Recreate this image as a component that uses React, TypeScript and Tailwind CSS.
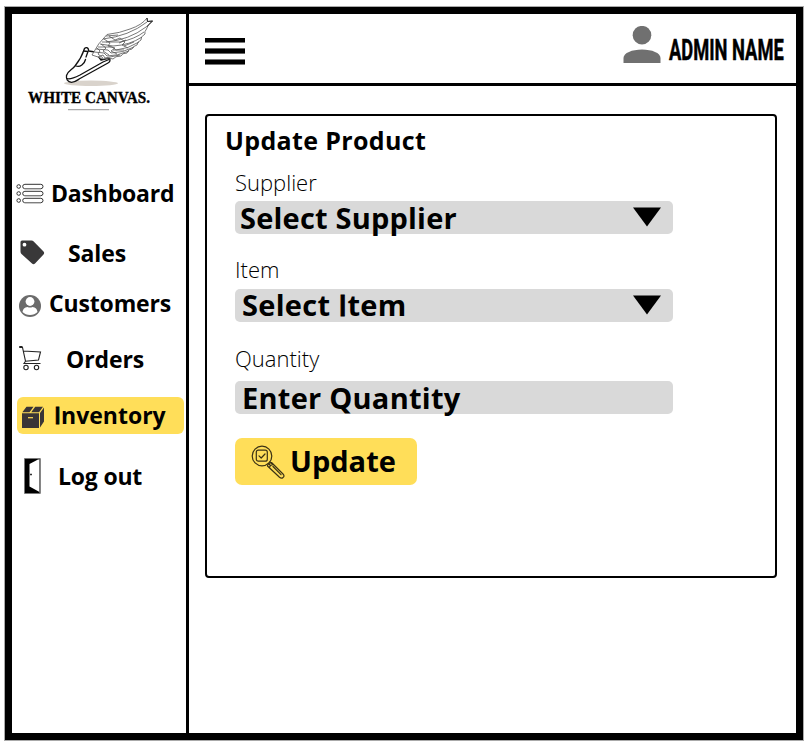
import type { ReactNode } from "react";

const openSans = "font-['Open_Sans','Noto_Sans',sans-serif]";

function Logo() {
  return (
    <svg className="block" width="174" height="100" viewBox="12 14 174 100" fill="none">
      <ellipse cx="91" cy="83.3" rx="27" ry="2.7" fill="#d9d3cc" />
      <g stroke="#111" strokeWidth="1.3" strokeLinejoin="round" strokeLinecap="round">
        <path d="M84 50 C84.500 47 88.500 46.500 88.700 51 L95 52 L101 60 L109.500 58 Q111 61.500 108 63 L80 78.500 C77 80.500 75 82.300 71.500 82.300 C67.500 82 66 79 66.500 75.500 C67.500 71 72 70 75 66 C79 61 82 56 84 50 Z" fill="#fff" />
        <path d="M67 78.500 C70 80 75 77.500 80 75 L103 62 L109 59.500 M83.500 51 L88 51.500 M76 66 C80 67.500 84.500 64 85.500 59.500 M86 57 L88 51.500" />
      </g>
      <g stroke="#555" strokeWidth="0.8" strokeLinejoin="round">
        <path d="M92 55 Q98 43 107 34.500 Q120 33 130 29 Q142 25 147 18 L147.500 21.500 L152.500 21 Q147 25 146.500 29 Q144 32 145 34 Q140 37 141 40 Q137 42 137 45 Q133 46 132 49 Q128 49 127 53 Q122 53 121 56 Q115 56 113 59 L109 58 L103 59 L98 57 Z" fill="#fff" />
        <path d="M103 39 Q129 36 147 22 M106 42 Q129 40 146 27 M102 42 L120 42 Q135 39 144 32 M100 44 L113 46 Q130 45 142 37 M98 47 L112 47 L116 50 Q128 49 139 42 M96 49 L108 50 L111 53 Q123 53 134 47 M94 52 L104 53 L107 56 Q117 56 129 51 M98 57 L103 55 L105 58 L120 55 M104 39 L110 43 L108 46 L115 48 L111 51 L117 54 M101 44 L106 48 L103 51 L109 55 M97 48 L100 51 L98 54 L103 58 M109 36 L115 40 L120 38 L125 42 L122 45 L128 48 M106 36 L118 35 M119 43 L126 40 M124 46 L134 42 M113 50 L124 50" />
      </g>
      <path d="M147 18 L147.500 21.500 L152.500 21 L146.500 27" stroke="#222" strokeWidth="1" />
      <text x="28" y="102.500" textLength="122" lengthAdjust="spacingAndGlyphs" className="font-['Liberation_Serif',serif] text-[16px] font-bold" fill="#000" stroke="#000" strokeWidth="0.35">WHITE CANVAS.</text>
      <path d="M68 109.700 H109" stroke="#aaa" strokeWidth="1.3" />
    </svg>
  );
}

const ListIcon = () => (
  <svg width="28" height="22" viewBox="0 0 28 22" fill="#fff" stroke="#333" strokeWidth="1">
    {[3.5, 10.5, 17.500].map((y) => (
      <g key={y}>
        <circle cx="2.700" cy={y} r="1.800" />
        <rect x="6.700" y={y - 2.200} width="20.300" height="4.400" rx="2.200" />
        <path d="M8 0 H25" transform={`translate(0 ${y + 2.200})`} stroke="#888" />
      </g>
    ))}
  </svg>
);

const TagIcon = () => (
  <svg width="25" height="25" viewBox="0 0 25 25">
    <path fillRule="evenodd" fill="#393839" d="M2 .5 H11.500 Q12.800 .5 13.700 1.400 L23.500 11.500 Q24.800 13 23.500 14.500 L15 23.500 Q13.500 25 12 23.500 L1.500 14 Q.5 13 .5 11.500 V2 Q.5 .5 2 .5 Z M4.500 2.800 A1.900 1.900 0 1 0 4.500 6.600 A1.900 1.900 0 1 0 4.500 2.800 Z" />
  </svg>
);

const CustomerIcon = () => (
  <svg width="22" height="22" viewBox="0 0 22 22">
    <circle cx="11" cy="11" r="11" fill="#6b6b6b" />
    <circle cx="11" cy="6.500" r="4.400" fill="#fff" />
    <path d="M3.500 17 Q4 12.500 8.500 12 Q11 13 13.500 12 Q18 12.500 18.500 17 Q15.500 20 11 20 Q6.500 20 3.500 17 Z" fill="#fff" />
  </svg>
);

const CartIcon = () => (
  <svg width="24" height="25" viewBox="0 0 24 25" fill="none" stroke="#222" strokeWidth="1.100">
    <path d="M.5 1 L3.500 1.500 L6.500 15.200 L5 17.500 H21.500 M4.200 5 L21.500 6 L19.500 14 L6.300 15.300" />
    <path d="M.3 1 H3.500" strokeWidth="2" />
    <circle cx="7" cy="21.500" r="2.200" />
    <circle cx="17.500" cy="21.500" r="2.200" />
  </svg>
);

const BoxIcon = () => (
  <svg width="23" height="23" viewBox="0 0 23 23">
    <path fill="#393536" d="M.3 6.300 L4.500 .8 H11.500 L7.500 6.300 Z M9.200 6.300 L13.200 .8 H21 L17 6.300 Z M0 7.300 H17 V22 H0 Z M18 7 L22 1.500 V15.500 L18 21.500 Z" />
    <path d="M6 11.700 H11" stroke="#ffde59" strokeWidth="1.200" />
  </svg>
);

const DoorIcon = () => (
  <svg width="17" height="36" viewBox="0 0 17 36">
    <path d="M.5 .5 H16.300 V35.500 H.5 Z" fill="#000" stroke="#777" strokeWidth="0.800" />
    <path d="M5.500 6 L14 1.500 H15.500 V34 L5.500 28.500 Z" fill="#fff" />
    <path d="M6 16.500 H8" stroke="#333" strokeWidth="1.300" />
    <path d="M15.800 1 V35" stroke="#777" />
  </svg>
);

const SearchCheckIcon = () => (
  <svg width="34" height="34" viewBox="0 0 34 34" fill="none" stroke="#3b3215" strokeWidth="1.200" strokeLinecap="round" strokeLinejoin="round">
    <circle cx="11" cy="11" r="9.800" />
    <rect x="5.300" y="5.200" width="11" height="11" rx="2" />
    <path d="M8 10.800 L10.200 13 L14 9 M17.500 18.500 L19 20 M19 17 L20.500 18.500 M16.500 21 Q16.500 18.500 20.500 17.500 L32 29 Q34 31 32 32.500 Q30.500 34 28.500 32.300 Z M18.500 22.500 Q18.500 20.500 22 19.500 M22 21.500 L30 29.700" />
  </svg>
);

/* The semibold capital I has no serifs; the stroke brings it to bold weight. */
const PlainI = () => <span className="font-semibold [-webkit-text-stroke:0.8px_black]">I</span>;

interface NavItemProps {
  label: ReactNode;
  icon: ReactNode;
  row: string;
  iconBox: string;
  text: string;
}

function NavItem({ label, icon, row, iconBox, text }: NavItemProps) {
  return (
    <a className={`flex items-center ${row}`}>
      <span className={`shrink-0 ${iconBox}`}>{icon}</span>
      <span className={`whitespace-nowrap text-[23px] leading-9 font-bold ${text}`}>{label}</span>
    </a>
  );
}

function Sidebar() {
  return (
    <aside className="h-full w-[177px] shrink-0 border-r-3 border-black">
      <Logo />
      <nav className="flex flex-col">
        <NavItem label="Dashboard" icon={<ListIcon />} row="mt-[61px] h-9" iconBox="ml-[4px] w-[35px] pt-[2px]" text="tracking-[-0.2px]" />
        <NavItem label="Sales" icon={<TagIcon />} row="mt-[24px] h-9" iconBox="ml-[8px] w-[48px] -mt-[2px]" text="tracking-[-0.1px]" />
        <NavItem label="Customers" icon={<CustomerIcon />} row="mt-[14px] h-9" iconBox="ml-[7px] w-[30px] pt-[5px]" text="tracking-[-0.15px]" />
        <NavItem label="Orders" icon={<CartIcon />} row="mt-[20px] h-9" iconBox="ml-[7px] w-[47px] -mt-[2px]" text="tracking-[-0.1px]" />
        <NavItem label={<><PlainI />nventory</>} icon={<BoxIcon />} row="mt-[20px] ml-[5px] mr-[2px] h-[37px] rounded-md bg-[#ffde59]" iconBox="ml-[5px] w-[32px] pt-[3px]" text="-mt-[2px]" />
        <NavItem label="Log out" icon={<DoorIcon />} row="mt-[24px] h-9" iconBox="ml-[12px] w-[34px]" text="tracking-[-0.2px]" />
      </nav>
    </aside>
  );
}

function Header() {
  return (
    <header className="flex h-[72px] items-start justify-between border-b-3 border-black">
      <div className="mt-[24px] ml-[16px] flex w-[40px] flex-col gap-[6px]">
        <span className="h-[5px] border-b border-[#777] bg-black" />
        <span className="-mt-px h-[6px] border-y border-[#666] bg-black" />
        <span className="-mt-px h-[6px] border-y border-[#777] bg-black" />
      </div>
      <div className="flex">
        <svg className="mt-[12px]" width="38" height="38" viewBox="0 0 38 38" fill="#707070">
          <circle cx="19" cy="9.200" r="9.300" />
          <path d="M.5 37 V32 C.5 27 9 23.500 19 23.500 S37.500 27 37.500 32 V37 Z" />
        </svg>
        <div className="ml-[8px] h-[60px] w-[127px]">
          <span className="inline-block origin-left scale-x-[0.61] whitespace-nowrap font-['Roboto',sans-serif] text-[30px] leading-[72px] font-bold [-webkit-text-stroke:0.5px_black]">ADMIN NAME</span>
        </div>
      </div>
    </header>
  );
}

interface FieldProps {
  label: string;
  value: ReactNode;
  labelClass: string;
  valueClass: string;
  dropdown?: boolean;
}

function Field({ label, value, labelClass, valueClass, dropdown }: FieldProps) {
  return (
    <div>
      <div className={`text-[22px] leading-[30px] font-light ${labelClass}`}>{label}</div>
      <div className="flex h-[33px] w-[438px] items-center justify-between rounded-[5px] bg-[#d9d9d9]">
        <span className={`whitespace-nowrap text-[29px] leading-[33px] font-bold ${valueClass}`}>{value}</span>
        {dropdown && (
          <svg className="-mt-px mr-[11px]" width="30" height="20" viewBox="0 0 30 20">
            <path d="M1 .5 H29 L15 19.500 Z" fill="#000" />
          </svg>
        )}
      </div>
    </div>
  );
}

export default function App() {
  return (
    <div className={`h-[744px] w-[807px] overflow-hidden bg-white pt-[6px] pl-[4px] text-black ${openSans}`}>
      <div className="h-[735px] w-[800px] border border-[#aaa]">
        <div className="flex h-full w-full border-7 border-black">
          <Sidebar />
          <main className="min-w-0 flex-1">
            <Header />
            <section className="mt-[28px] ml-[16px] h-[464px] w-[572px] rounded-[4px] border-2 border-black pl-[28px]">
              <h1 className="mt-[7px] -ml-[10px] text-[25px] leading-[34px] font-bold tracking-[0.35px]">Update Product</h1>
              <div className="mt-[10px]">
                <Field label="Supplier" value="Select Supplier" labelClass="mb-[4px]" valueClass="ml-[5px] tracking-[0.2px]" dropdown />
              </div>
              <div className="mt-[20px]">
                <Field label="Item" value={<>Select <PlainI />tem</>} labelClass="mb-[5px]" valueClass="-mt-[2px] ml-[7px] tracking-[0.3px]" dropdown />
              </div>
              <div className="mt-[21px]">
                <Field label="Quantity" value="Enter Quantity" labelClass="mb-[8px]" valueClass="ml-[7px] tracking-[0.25px]" />
              </div>
              <button className="mt-[24px] flex h-[47px] w-[182px] items-center rounded-[7px] bg-[#ffde59] pl-[16px]">
                <SearchCheckIcon />
                <span className="-mt-[2px] ml-[5px] text-[29px] leading-[47px] font-bold">Update</span>
              </button>
            </section>
          </main>
        </div>
      </div>
    </div>
  );
}
